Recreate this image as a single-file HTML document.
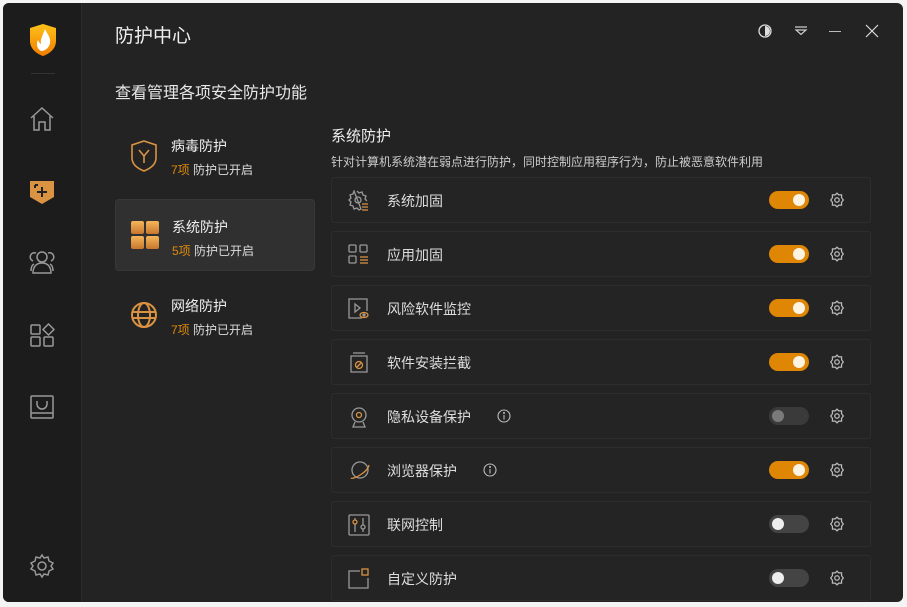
<!DOCTYPE html>
<html><head><meta charset="utf-8"><style>
*{box-sizing:border-box;margin:0;padding:0}
body{width:907px;height:607px;background:#f4f4f4;font-family:"Liberation Sans","Noto Sans CJK SC",sans-serif;position:relative;overflow:hidden}
.win{position:absolute;left:3px;top:3px;width:900px;height:599px;background:#232323;border-radius:6px;overflow:hidden}
.side{position:absolute;left:0;top:0;width:79px;height:100%;background:#1c1c1c;border-right:1px solid #2c2c2c}
.side svg{position:absolute;left:26px}
.t1{position:absolute;left:112px;top:18px;color:#eee;font-size:19px}
.t2{position:absolute;left:112px;top:76px;color:#e8e8e8;font-size:16px}
.cat{position:absolute;left:112px;width:200px;height:72px;border-radius:4px}
.cat.sel{background:#303030;border:1px solid #383838}
.cat .n{position:absolute;left:56px;top:17px;color:#eee;font-size:14px}
.cat .s{position:absolute;left:56px;top:42px;color:#ddd;font-size:12px}
.cat .s b{color:#e08a0a;font-weight:normal}
.cat svg{position:absolute;left:15px;top:21px}
.h{position:absolute;left:328px;top:122px;color:#eee;font-size:15px}
.d{position:absolute;left:328px;top:150px;color:#ccc;font-size:12px}
.row{position:absolute;left:328px;width:540px;height:46px;border:1px solid #2d2d2d;border-radius:3px;background:#242424}
.row .l{position:absolute;left:55px;top:13px;color:#ddd;font-size:14px}
.row .ic{position:absolute;left:16px;top:12px}
.tg{position:absolute;left:437px;top:13px;width:40px;height:18px;border-radius:9px;background:#df8705}
.tg:after{content:"";position:absolute;right:4px;top:3px;width:12px;height:12px;border-radius:50%;background:#fdf3e3}
.tg.off{background:#444}.tg.off:after{left:3px;right:auto;background:#eee}
.tg.dis{background:#3a3a3a}.tg.dis:after{left:3px;right:auto;background:#7a7a7a}
.gear{position:absolute;left:497px;top:14px}
.info{position:absolute;top:15px;width:14px;height:14px}
</style></head><body>
<div class="win">
<div class="side">
<svg style="top:20px" width="28" height="34" viewBox="0 0 28 34"><defs><linearGradient id="g1" x1="0" y1="0" x2="0" y2="1"><stop offset="0" stop-color="#ffc21a"/><stop offset="1" stop-color="#f07d00"/></linearGradient></defs><path d="M14 1L27 5V18C27 26 20 31 14 33C8 31 1 26 1 18V5Z" fill="url(#g1)"/><path d="M16 6C18 11 22 14 21 20C20 25 16 28 12 28C8 26 7 21 9 17C10 20 12 21 12 21C11 16 14 12 16 6Z" fill="#fff"/></svg>
<div style="position:absolute;left:28px;top:70px;width:24px;height:1px;background:#333"></div>
<svg style="top:103px" width="26" height="26" viewBox="0 0 26 26" fill="none" stroke="#999" stroke-width="1.5"><path d="M2 12L13 2L24 12M5 10V24H10V16H16V24H21V10"/></svg>
<svg style="top:176px" width="26" height="26" viewBox="0 0 26 26"><path d="M1 2H25V18L13 25L1 18Z" fill="#d99343"/><path d="M13 8V18M8 13H18M6 6H9M6 6V9" stroke="#222" stroke-width="2" fill="none"/></svg>
<svg style="top:246px" width="26" height="26" viewBox="0 0 26 26" fill="none" stroke="#999" stroke-width="1.5"><circle cx="13" cy="8" r="5"/><path d="M4 24C4 17 8 14 13 14C18 14 22 17 22 24Z"/><path d="M7 4A4 4 0 0 0 4 12M19 4A4 4 0 0 1 22 12M2 22C2 18 3 16 5 15M24 22C24 18 23 16 21 15"/></svg>
<svg style="top:320px" width="26" height="26" viewBox="0 0 26 26" fill="none" stroke="#999" stroke-width="1.5"><rect x="2" y="14" width="9" height="9" rx="1"/><rect x="15" y="14" width="9" height="9" rx="1"/><rect x="2" y="2" width="9" height="9" rx="1"/><path d="M19.5 1L25 6.5L19.5 12L14 6.5Z"/></svg>
<svg style="top:391px" width="26" height="26" viewBox="0 0 26 26" fill="none" stroke="#999" stroke-width="1.5"><rect x="2" y="2" width="22" height="22" rx="1"/><path d="M2 19H24M8 7V10A5 5 0 0 0 18 10V7"/></svg>
<svg style="top:550px" width="26" height="26" viewBox="0 0 26 26" fill="none" stroke="#999" stroke-width="1.5"><path d="M13 2L15 5L19 4L20 8L24 10L22 13L24 16L20 18L19 22L15 21L13 24L11 21L7 22L6 18L2 16L4 13L2 10L6 8L7 4L11 5Z"/><circle cx="13" cy="13" r="4"/></svg>
</div>
<div class="t1">防护中心</div>
<svg style="position:absolute;left:754px;top:20px" width="18" height="16" viewBox="0 0 18 16"><circle cx="8" cy="8" r="6" fill="none" stroke="#ddd" stroke-width="1.3"/><path d="M8 3A5 5 0 0 1 8 13Z" fill="#ddd"/></svg>
<svg style="position:absolute;left:790px;top:20px" width="16" height="16" viewBox="0 0 16 16" fill="none" stroke="#ccc" stroke-width="1.2"><path d="M2 4H14M3 7H13L8 11.5Z"/></svg>
<div style="position:absolute;left:826px;top:28px;width:12px;height:1px;background:#bbb"></div>
<svg style="position:absolute;left:862px;top:21px" width="14" height="14" viewBox="0 0 14 14" stroke="#ddd" stroke-width="1.2"><path d="M1 1L13 13M13 1L1 13"/></svg>
<div class="t2">查看管理各项安全防护功能</div>
<div class="cat" style="top:116px"><svg width="28" height="32" viewBox="0 0 28 32" fill="none" stroke="#d99343" stroke-width="1.6"><path d="M14 1L26 5V18C26 25 19 29 14 31C9 29 2 25 2 18V5Z"/><path d="M9 10L14 16L19 10M14 16V23"/></svg><div class="n">病毒防护</div><div class="s"><b>7项</b> 防护已开启</div></div>
<div class="cat sel" style="top:196px"><svg width="30" height="30" viewBox="0 0 30 30"><defs><linearGradient id="g2" x1="0" y1="0" x2="0" y2="1"><stop offset="0" stop-color="#f5b65a"/><stop offset="1" stop-color="#c8772e"/></linearGradient></defs><rect x="0" y="0" width="13" height="13" rx="2" fill="url(#g2)"/><rect x="15" y="0" width="13" height="13" rx="2" fill="url(#g2)"/><rect x="0" y="15" width="13" height="13" rx="2" fill="url(#g2)"/><rect x="15" y="15" width="13" height="13" rx="2" fill="url(#g2)"/></svg><div class="n">系统防护</div><div class="s"><b>5项</b> 防护已开启</div></div>
<div class="cat" style="top:276px"><svg width="30" height="30" viewBox="0 0 30 30" fill="none" stroke="#d99343" stroke-width="2"><circle cx="14" cy="15" r="12"/><ellipse cx="14" cy="15" rx="6" ry="12"/><path d="M3 12H25M3 18H25"/></svg><div class="n">网络防护</div><div class="s"><b>7项</b> 防护已开启</div></div>
<div class="h">系统防护</div>
<div class="d">针对计算机系统潜在弱点进行防护，同时控制应用程序行为，防止被恶意软件利用</div>

<div class="row" style="top:174px"><svg class="ic" width="22" height="22" viewBox="0 0 22 22" fill="none" stroke="#999" stroke-width="1.3"><path d="M9 1L11 3L14 2L15 5L18 6L17 9L19 11M13 19L11 20L9 18L6 19L5 16L2 15L3 12L1 10L3 8L2 5L5 4L6 1Z"/><circle cx="10" cy="10" r="3"/><path d="M14 14H20M14 17H20M14 20H20" stroke="#d99343"/></svg><div class="l">系统加固</div><div class="tg"></div><svg class="gear" width="16" height="16" viewBox="0 0 14 14" fill="none" stroke="#bbb" stroke-width="1.1"><path d="M7 1L8.5 2.5L11 2.5L11 5L12.5 7L11 9L11 11.5L8.5 11.5L7 13L5.5 11.5L3 11.5L3 9L1.5 7L3 5L3 2.5L5.5 2.5Z"/><circle cx="7" cy="7" r="2"/></svg></div>
<div class="row" style="top:228px"><svg class="ic" width="22" height="22" viewBox="0 0 22 22" fill="none" stroke="#999" stroke-width="1.3"><rect x="1" y="1" width="7" height="7" rx="1"/><rect x="12" y="1" width="7" height="7" rx="1"/><rect x="1" y="12" width="7" height="7" rx="1"/><path d="M12 13H20M12 16H20M12 19H20" stroke="#d99343"/></svg><div class="l">应用加固</div><div class="tg"></div><svg class="gear" width="16" height="16" viewBox="0 0 14 14" fill="none" stroke="#bbb" stroke-width="1.1"><path d="M7 1L8.5 2.5L11 2.5L11 5L12.5 7L11 9L11 11.5L8.5 11.5L7 13L5.5 11.5L3 11.5L3 9L1.5 7L3 5L3 2.5L5.5 2.5Z"/><circle cx="7" cy="7" r="2"/></svg></div>
<div class="row" style="top:282px"><svg class="ic" width="22" height="22" viewBox="0 0 22 22" fill="none" stroke="#999" stroke-width="1.3"><path d="M14 20H1V1H19V13"/><path d="M7 6L12 10L7 14Z"/><ellipse cx="16" cy="17" rx="4" ry="2.5" stroke="#d99343"/><circle cx="16" cy="17" r="1" fill="#d99343"/></svg><div class="l">风险软件监控</div><div class="tg"></div><svg class="gear" width="16" height="16" viewBox="0 0 14 14" fill="none" stroke="#bbb" stroke-width="1.1"><path d="M7 1L8.5 2.5L11 2.5L11 5L12.5 7L11 9L11 11.5L8.5 11.5L7 13L5.5 11.5L3 11.5L3 9L1.5 7L3 5L3 2.5L5.5 2.5Z"/><circle cx="7" cy="7" r="2"/></svg></div>
<div class="row" style="top:336px"><svg class="ic" width="22" height="22" viewBox="0 0 22 22" fill="none" stroke="#999" stroke-width="1.3"><path d="M3 4H19V20H3Z"/><path d="M5 1H17"/><circle cx="11" cy="13" r="3.5" stroke="#d99343"/><path d="M9 15L13 11" stroke="#d99343"/></svg><div class="l">软件安装拦截</div><div class="tg"></div><svg class="gear" width="16" height="16" viewBox="0 0 14 14" fill="none" stroke="#bbb" stroke-width="1.1"><path d="M7 1L8.5 2.5L11 2.5L11 5L12.5 7L11 9L11 11.5L8.5 11.5L7 13L5.5 11.5L3 11.5L3 9L1.5 7L3 5L3 2.5L5.5 2.5Z"/><circle cx="7" cy="7" r="2"/></svg></div>
<div class="row" style="top:390px"><svg class="ic" width="22" height="22" viewBox="0 0 22 22" fill="none" stroke="#999" stroke-width="1.3"><circle cx="11" cy="9" r="7"/><circle cx="11" cy="9" r="2.5" stroke="#d99343"/><path d="M7 16L5 21H17L15 16"/></svg><div class="l">隐私设备保护</div><svg class="info" style="left:165px" viewBox="0 0 14 14" fill="none" stroke="#bbb" stroke-width="1.1"><circle cx="7" cy="7" r="6"/><path d="M7 6V10.5"/><circle cx="7" cy="4" r="0.5" fill="#bbb"/></svg><div class="tg dis"></div><svg class="gear" width="16" height="16" viewBox="0 0 14 14" fill="none" stroke="#bbb" stroke-width="1.1"><path d="M7 1L8.5 2.5L11 2.5L11 5L12.5 7L11 9L11 11.5L8.5 11.5L7 13L5.5 11.5L3 11.5L3 9L1.5 7L3 5L3 2.5L5.5 2.5Z"/><circle cx="7" cy="7" r="2"/></svg></div>
<div class="row" style="top:444px"><svg class="ic" width="22" height="22" viewBox="0 0 22 22" fill="none" stroke="#999" stroke-width="1.3"><circle cx="12" cy="10" r="8"/><path d="M3 18C5 20 20 12 21 5" stroke="#d99343"/></svg><div class="l">浏览器保护</div><svg class="info" style="left:151px" viewBox="0 0 14 14" fill="none" stroke="#bbb" stroke-width="1.1"><circle cx="7" cy="7" r="6"/><path d="M7 6V10.5"/><circle cx="7" cy="4" r="0.5" fill="#bbb"/></svg><div class="tg"></div><svg class="gear" width="16" height="16" viewBox="0 0 14 14" fill="none" stroke="#bbb" stroke-width="1.1"><path d="M7 1L8.5 2.5L11 2.5L11 5L12.5 7L11 9L11 11.5L8.5 11.5L7 13L5.5 11.5L3 11.5L3 9L1.5 7L3 5L3 2.5L5.5 2.5Z"/><circle cx="7" cy="7" r="2"/></svg></div>
<div class="row" style="top:498px"><svg class="ic" width="22" height="22" viewBox="0 0 22 22" fill="none" stroke="#999" stroke-width="1.3"><rect x="1" y="1" width="20" height="20" rx="1"/><path d="M7 4V18M15 4V18"/><circle cx="7" cy="8" r="2" stroke="#d99343" fill="#242424"/><circle cx="15" cy="13" r="2" fill="#242424"/></svg><div class="l">联网控制</div><div class="tg off"></div><svg class="gear" width="16" height="16" viewBox="0 0 14 14" fill="none" stroke="#bbb" stroke-width="1.1"><path d="M7 1L8.5 2.5L11 2.5L11 5L12.5 7L11 9L11 11.5L8.5 11.5L7 13L5.5 11.5L3 11.5L3 9L1.5 7L3 5L3 2.5L5.5 2.5Z"/><circle cx="7" cy="7" r="2"/></svg></div>
<div class="row" style="top:552px"><svg class="ic" width="22" height="22" viewBox="0 0 22 22" fill="none" stroke="#999" stroke-width="1.3"><path d="M12 3H1V20H20V10"/><rect x="14" y="1" width="6" height="6" stroke="#d99343"/></svg><div class="l">自定义防护</div><div class="tg off"></div><svg class="gear" width="16" height="16" viewBox="0 0 14 14" fill="none" stroke="#bbb" stroke-width="1.1"><path d="M7 1L8.5 2.5L11 2.5L11 5L12.5 7L11 9L11 11.5L8.5 11.5L7 13L5.5 11.5L3 11.5L3 9L1.5 7L3 5L3 2.5L5.5 2.5Z"/><circle cx="7" cy="7" r="2"/></svg></div>
</div>
</body></html>
